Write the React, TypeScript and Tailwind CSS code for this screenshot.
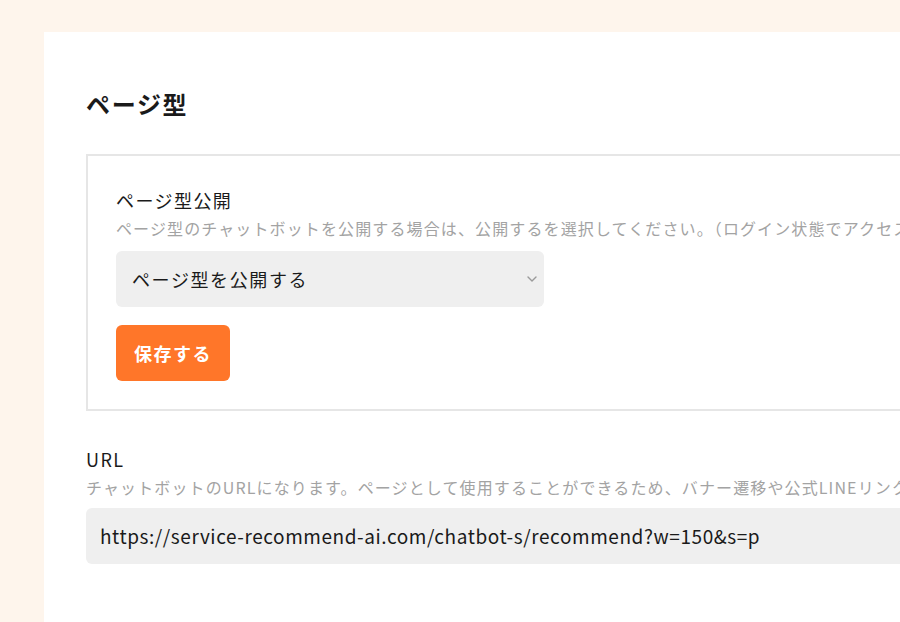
import React from "react";

const font = { fontFamily: '"Noto Sans CJK JP", "Noto Sans", sans-serif' };

function Chevron() {
  return (
    <svg width="10" height="6" viewBox="0 0 10 6" fill="none" className="shrink-0">
      <path d="M1 1l4 4 4-4" stroke="#9a9a9a" strokeWidth="1.4" strokeLinecap="round" strokeLinejoin="round" />
    </svg>
  );
}

export default function App() {
  return (
    <div
      className="h-[622px] w-[900px] overflow-hidden bg-[#fef5ec] pl-[44px] pt-[32px] text-[#1a1a1a]"
      style={font}
    >
      <div className="min-h-[600px] w-[1000px] bg-white pl-[42px] pt-[54px]">
        <h1 className="text-[24px] font-bold leading-9 tracking-[0.07em]">ページ型</h1>

        <div className="mt-8 border-2 border-[#e6e6e6] pb-[28px] pl-[28px] pt-[30px]">
          <div className="text-[18px] leading-7 tracking-[0.08em]">ページ型公開</div>
          <div className="mt-1 whitespace-nowrap text-[16px] leading-5 tracking-[0.07em] text-[#a3a3a3]">
            ページ型のチャットボットを公開する場合は、公開するを選択してください。（ログイン状態でアクセスした場合のみ表示されます）
          </div>
          <div className="mt-[13px] flex h-[56px] w-[428px] items-center justify-between rounded-md bg-[#efefef] pl-4 pr-[7px]">
            <span className="text-[18px] tracking-[0.09em]">ページ型を公開する</span>
            <Chevron />
          </div>
          <button className="mt-[18px] flex h-[56px] w-[114px] items-center justify-center rounded-md bg-[#ff7629] text-[18px] font-bold tracking-[0.08em] text-white">
            保存する
          </button>
        </div>

        <div className="mt-[34px] text-[18px] leading-7 tracking-[0.08em]">URL</div>
        <div className="mt-1 whitespace-nowrap text-[16px] leading-5 tracking-[0.07em] text-[#a3a3a3]">
          チャットボットのURLになります。ページとして使用することができるため、バナー遷移や公式LINEリンクなどにご利用ください。
        </div>
        <div className="mt-[11px] flex h-[56px] items-center rounded-md bg-[#efefef] pl-[14px] text-[19px] tracking-[0.03em]">
          https://service-recommend-ai.com/chatbot-s/recommend?w=150&amp;s=p
        </div>
      </div>
    </div>
  );
}
